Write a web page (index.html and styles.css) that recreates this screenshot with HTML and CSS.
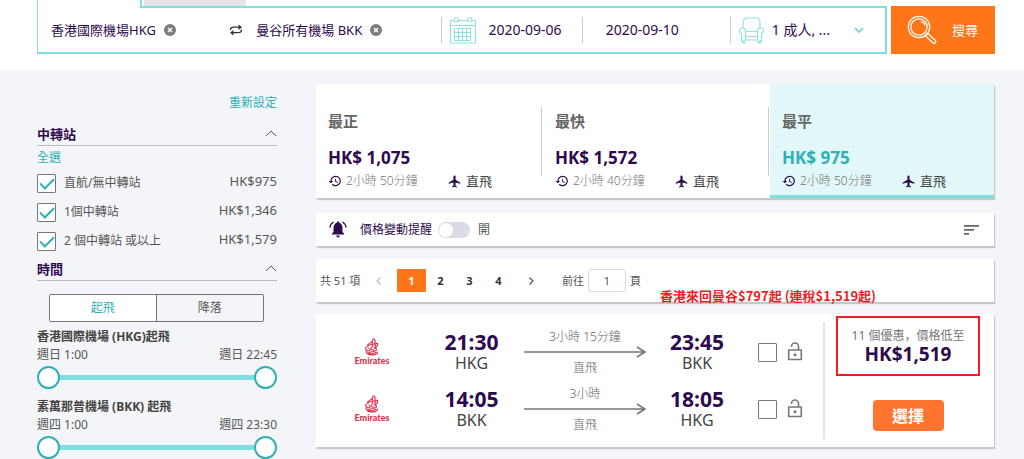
FILE: index.html
```html
<!DOCTYPE html>
<html lang="zh-Hant-HK">
<head>
<meta charset="utf-8">
<meta name="viewport" content="width=device-width, initial-scale=1">
<title>機票搜尋</title>
<link rel="stylesheet" href="styles.css">
</head>
<body>
<svg class="sprite" aria-hidden="true">
  <symbol id="clear" viewBox="0 0 12 12"><circle cx="6" cy="6" r="6" fill="#7d7d7d"/><path d="M4 4l4 4M8 4l-4 4" stroke="#fff" stroke-width="1.5"/></symbol>
  <symbol id="history" viewBox="0 0 24 24"><path fill="#2d0a4e" d="M13 3a9 9 0 0 0-9 9H1l4 4 4-4H6a7 7 0 1 1 2 4.900l-1.400 1.400A9 9 0 1 0 13 3zm-1 5v5l4.300 2.500.7-1.200-3.500-2.100V8z"/></symbol>
  <symbol id="plane" viewBox="2 1 20 22"><path fill="#2d0a4e" d="M10.200 9V3.500a1.800 1.800 0 0 1 3.600 0V9L22 14v2l-8.200-2.500V19l2.200 1.500V22l-4-1-4 1v-1.500l2.200-1.500v-5.500L2 16v-2z"/></symbol>
  <symbol id="lock" viewBox="0 0 16 20"><path d="M4.500 5V4.500a3.500 3.500 0 0 1 7 0V8M1.700 8h12.600v9.500H1.700z" fill="none" stroke="#777" stroke-width="1.600" stroke-linejoin="round"/><circle cx="8" cy="12.800" r="1.500" fill="#777"/></symbol>
  <symbol id="up" viewBox="0 0 12 7"><path d="M1 6l5-5 5 5" fill="none" stroke="#62536f" stroke-width="1"/></symbol>
  <symbol id="arrow" viewBox="0 0 122 12"><path d="M0 6h121M113 1l8 5-8 5" fill="none" stroke="#757575" stroke-width="1.500"/></symbol>
  <symbol id="script-mark" viewBox="0 0 16 18">
    <path fill="none" stroke="#dc3450" stroke-width="1.200" stroke-linecap="round" d="M10 .8C7.500 2 9 4 6.500 5S3 7.500 4 9M11 1.500c-.5 3 1 5 0 8M8.500 4.500c1 2 0 4-1 5.500M3.500 7.500l9-2M13.500 5c.5 3-1 4.500-3 4.500M2 9c-1 3 1 4.500 4 3.500M5 10.500l5 2M10 10c2 0 3 1 2 2.500s-6 1-7.500 2.500M2 13.500c1 2.500 3 3.500 6 3.500s5-1 5.500-3M5 15.500c2 .5 5 0 6.500-1"/>
  </symbol>
</svg>

<header class="top">
  <nav class="tabs" aria-label="行程類型"><span class="tab tab-on"></span><span class="tab"></span></nav>
  <form class="search">
    <div class="fields">
      <div class="field place"><span>香港國際機場HKG</span><button type="button" class="plain" aria-label="清除出發地"><svg width="12" height="12"><use href="#clear"/></svg></button></div>
      <button type="button" class="plain swap" aria-label="交換地點"><svg width="14" height="12" viewBox="0 0 14 12" fill="none" stroke="#333" stroke-width="1.300"><path d="M1.500 6C1.500 4 3 3.200 5 3.200h6M12.500 5.500c0 2.300-1.500 3.200-3.500 3.200H3"/><path fill="#333" stroke="none" d="M9.500.5L13 3.200 9.500 6zM4.500 6L1 8.700l3.500 2.800z"/></svg></button>
      <div class="field"><span>曼谷所有機場 BKK</span><button type="button" class="plain" aria-label="清除目的地"><svg width="12" height="12"><use href="#clear"/></svg></button></div>
      <div class="field date ruled">
        <svg width="26" height="27" viewBox="0 0 26 27" fill="none" stroke="#8fe0e2"><path d="M.5 3.500h25v22.500H.5zM.5 8.500h25M4.500 11.500h16v12h-16zM8.500 11.500v12M12.500 11.500v12M16.500 11.500v12M4.500 15.500h16M4.500 19.500h16"/><path fill="#fff" d="M4.500 1h4v3.500h-4zM17.500 1h4v3.500h-4z"/></svg>
        <span>2020-09-06</span>
      </div>
      <div class="field date return ruled"><span>2020-09-10</span></div>
      <div class="field pax ruled">
        <svg width="25" height="27" viewBox="0 0 25 27" fill="none" stroke="#8fe0e2" stroke-width="1.200"><path d="M4 11V6c0-3 1.500-5 4-5h9c2.500 0 4 2 4 5v5M6.500 14.500h12M6.500 14.500v9M18.500 14.500v9M6.500 19.500h12M6.500 23h12M4 11c-2.500 0-3.500 1.500-3.500 3 0 1.500 1 2 2 2.500V24h4M21 11c2.500 0 3.500 1.500 3.500 3 0 1.500-1 2-2 2.500V24h-4M4 11c2 0 2.500 1.500 2.500 3.500M21 11c-2 0-2.500 1.500-2.500 3.500M3.500 24v2h2v-2M19.500 24v2h2v-2"/></svg>
        <span>1 成人, ...</span>
        <svg class="down" width="10" height="7" viewBox="0 0 10 7" fill="none" stroke="#6cd0d4" stroke-width="1.600"><path d="M1 1l4 4 4-4"/></svg>
      </div>
    </div>
    <button type="submit" class="go">
      <svg width="30" height="30" viewBox="0 0 30 30" fill="none" stroke="#fff" stroke-width="1.200"><circle cx="12" cy="12" r="10.700"/><circle cx="12" cy="12" r="8.200"/><path d="M14 6.500c2 .5 3.500 2 4 4M19.500 20l1.500-1.500M18 20.500l2.500-2.500 8 7.500c1.200 1.500-1 3.700-2.500 2.500z"/></svg>
      <span>搜尋</span>
    </button>
  </form>
</header>

<div class="page">
  <aside class="filters">
    <a href="#" class="link reset">重新設定</a>
    <section>
      <h2 class="heading">中轉站<svg width="12" height="7"><use href="#up"/></svg></h2>
      <a href="#" class="link all">全選</a>
      <ul class="stops">
        <li><label><input type="checkbox" class="box" checked><span>直航/無中轉站</span></label><span class="cost">HK$975</span></li>
        <li><label><input type="checkbox" class="box" checked><span>1個中轉站</span></label><span class="cost">HK$1,346</span></li>
        <li><label><input type="checkbox" class="box" checked><span>2 個中轉站 或以上</span></label><span class="cost">HK$1,579</span></li>
      </ul>
    </section>
    <section>
      <h2 class="heading">時間<svg width="12" height="7"><use href="#up"/></svg></h2>
      <div class="segment"><button type="button" class="on">起飛</button><button type="button">降落</button></div>
      <div class="range">
        <h3>香港國際機場 (HKG)起飛</h3>
        <p><span>週日 1:00</span><span>週日 22:45</span></p>
        <div class="slider"><input type="range" value="0" aria-label="香港最早起飛"><input type="range" value="100" aria-label="香港最遲起飛"></div>
      </div>
      <div class="range">
        <h3>素萬那普機場 (BKK) 起飛</h3>
        <p><span>週四 1:00</span><span>週四 23:30</span></p>
        <div class="slider"><input type="range" value="0" aria-label="曼谷最早起飛"><input type="range" value="100" aria-label="曼谷最遲起飛"></div>
      </div>
    </section>
  </aside>

  <main class="results">
    <div class="card sorts">
      <button type="button" class="sort"><strong>最正</strong><b>HK$ 1,075</b><span class="meta"><svg width="14" height="14"><use href="#history"/></svg><span class="dur">2小時 50分鐘</span><svg width="13" height="13"><use href="#plane"/></svg><span class="direct">直飛</span></span></button>
      <button type="button" class="sort"><strong>最快</strong><b>HK$ 1,572</b><span class="meta"><svg width="14" height="14"><use href="#history"/></svg><span class="dur">2小時 40分鐘</span><svg width="13" height="13"><use href="#plane"/></svg><span class="direct">直飛</span></span></button>
      <button type="button" class="sort current"><strong>最平</strong><b>HK$ 975</b><span class="meta"><svg width="14" height="14"><use href="#history"/></svg><span class="dur">2小時 50分鐘</span><svg width="13" height="13"><use href="#plane"/></svg><span class="direct">直飛</span></span></button>
    </div>

    <div class="card alert">
      <svg width="18" height="17" viewBox="0 0 18 17"><path fill="#2d0a4e" d="M9 .5c.8 0 1.200.5 1.200 1.200C12.500 2.500 13.500 4.500 13.500 7v4l1.500 1.500v1H3v-1L4.500 11V7c0-2.500 1-4.500 3.300-5.300C7.800 1 8.200.5 9 .5zM7.300 14.500h3.400C10.700 17 7.300 17 7.300 14.500z"/><path d="M4.500 1C2.500 2.200 1.200 4 1 6.500M13.500 1c2 1.200 3.300 3 3.500 5.500" fill="none" stroke="#2d0a4e" stroke-width="1.400"/></svg>
      <label class="alert-name" for="notify">價格變動提醒</label>
      <input type="checkbox" id="notify" class="switch">
      <span class="state">開</span>
      <button type="button" class="plain order" aria-label="排序"><svg width="15" height="10" viewBox="0 0 15 10" fill="#666"><path d="M0 0h15v1.700H0zM0 4h10v1.700H0zM0 8h5v1.700H0z"/></svg></button>
    </div>

    <div class="card pager">
      <span class="total">共 51 項</span>
      <button type="button" class="step" aria-label="上一頁" disabled><svg width="5" height="8" viewBox="0 0 5 8" fill="none" stroke="#bbb" stroke-width="1.200"><path d="M4.500.5L1 4l3.500 3.500"/></svg></button>
      <button type="button" class="num active">1</button><button type="button" class="num">2</button><button type="button" class="num">3</button><button type="button" class="num">4</button>
      <button type="button" class="step" aria-label="下一頁"><svg width="5" height="8" viewBox="0 0 5 8" fill="none" stroke="#555" stroke-width="1.200"><path d="M.5.5L4 4 .5 7.500"/></svg></button>
      <label class="jump">前往<input type="text" value="1">頁</label>
    </div>

    <article class="card flight">
      <p class="note">香港來回曼谷$797起 (連稅$1,519起)</p>
      <div class="legs">
        <div class="leg">
          <div class="airline"><svg width="16" height="18"><use href="#script-mark"/></svg><span>Emirates</span></div>
          <div class="point"><b>21:30</b><span>HKG</span></div>
          <div class="path"><span>3小時 15分鐘</span><svg viewBox="0 0 122 12"><use href="#arrow"/></svg><span>直飛</span></div>
          <div class="point"><b>23:45</b><span>BKK</span></div>
          <div class="pick"><input type="checkbox" class="box" aria-label="鎖定去程"><svg width="16" height="20"><use href="#lock"/></svg></div>
        </div>
        <div class="leg">
          <div class="airline"><svg width="16" height="18"><use href="#script-mark"/></svg><span>Emirates</span></div>
          <div class="point"><b>14:05</b><span>BKK</span></div>
          <div class="path"><span>3小時</span><svg viewBox="0 0 122 12"><use href="#arrow"/></svg><span>直飛</span></div>
          <div class="point"><b>18:05</b><span>HKG</span></div>
          <div class="pick"><input type="checkbox" class="box" aria-label="鎖定回程"><svg width="16" height="20"><use href="#lock"/></svg></div>
        </div>
      </div>
      <div class="offer">
        <div class="deal"><span lang="zh-Hans">11 個優惠，價格低至</span><b>HK$1,519</b></div>
        <button type="button" class="choose">選擇</button>
      </div>
    </article>
  </main>
</div>
</body>
</html>
```

FILE: styles.css
```css
:root {
  --ink: #2d0a4e;
  --teal: #2fb0b6;
  --aqua: #7fdfe0;
  --orange: #ff7618;
}

* { box-sizing: border-box; }

body {
  margin: 0;
  background: #f4f5f8;
  color: #555;
  font: 12px/18px "Noto Sans", "Noto Sans CJK TC", sans-serif;
}

h2, h3, p, ul { margin: 0; padding: 0; }
ul { list-style: none; }
svg { display: block; flex: none; }
button, input { font: inherit; color: inherit; margin: 0; }
button { padding: 0; border: 0; background: none; cursor: pointer; }
.sprite { position: absolute; width: 0; height: 0; }
.plain { display: flex; align-items: center; }

/* Search bar */
.top { background: #fff; padding: 0 29px 16px 37px; }
.tabs { display: flex; gap: 2px; height: 6px; }
.tab { width: 102px; height: 6px; background: #e5e5e5; }
.tab-on {
  position: relative;
  width: 105px;
  height: 8px;
  background: #fff;
  border: solid var(--aqua);
  border-width: 0 2px 0 1px;
}
.search { display: flex; gap: 4px; height: 48px; }
.fields {
  flex: 1;
  display: grid;
  grid-template-columns: 191fr 27fr 185fr 140fr 148fr 155fr;
  align-items: center;
  border: 2px solid var(--aqua);
  border-left-width: 1px;
  font-size: 13px;
  color: var(--ink);
}
.field { display: flex; align-items: center; gap: 8px; height: 26px; white-space: nowrap; }
.place { padding-left: 13px; }
.ruled { border-left: 1px solid #ccc; padding-left: 8px; }
.date { font-size: 14px; gap: 12px; }
.return { padding-left: 23px; }
.pax { font-size: 14px; }
.down { margin-left: auto; margin-right: 21px; }
.go {
  flex: 0 0 104px;
  display: flex;
  align-items: center;
  padding-left: 16px;
  gap: 15px;
  background: var(--orange);
  color: #fff;
  font-size: 13px;
}

/* Page columns */
.page {
  display: grid;
  grid-template-columns: 240px 1fr;
  gap: 39px;
  padding: 14px 30px 0 37px;
}

/* Filters */
.filters { display: flex; flex-direction: column; padding-top: 10px; }
.link { color: var(--teal); text-decoration: none; }
.reset { align-self: flex-end; }
.heading {
  display: flex;
  align-items: center;
  justify-content: space-between;
  height: 24px;
  border-bottom: 1px solid #bbb;
  font-size: 13px;
  color: var(--ink);
}
.reset + section { margin-top: 10px; }
.all { display: block; margin-top: 3px; }
.stops { margin-top: 6px; }
.stops li { display: flex; justify-content: space-between; height: 29px; }
.stops li:last-child { height: 26px; }
.stops label { display: flex; gap: 8px; align-items: center; height: 20px; }
.cost { font-size: 13px; line-height: 16px; }
.box {
  appearance: none;
  flex: none;
  display: grid;
  place-items: center;
  width: 19px;
  height: 19px;
  border: 1px solid #777;
  border-radius: 1px;
  background: #fff;
}
.box:checked::before {
  content: "";
  width: 12px;
  height: 6px;
  margin-bottom: 3px;
  border: solid var(--teal);
  border-width: 0 0 2px 2px;
  transform: rotate(-45deg);
}
.segment {
  display: grid;
  grid-template-columns: 1fr 1fr;
  height: 28px;
  margin: 13px 13px 6px 12px;
  border: 1px solid #777;
  border-radius: 2px;
}
.segment .on { background: #fff; color: var(--teal); border-right: 1px solid #777; }
.range { height: 70px; }
.range h3 { font-size: 12px; line-height: 18px; color: #444; }
.range p { display: flex; justify-content: space-between; }
.slider {
  display: grid;
  height: 24px;
  margin-top: 1px;
  background: linear-gradient(var(--aqua), var(--aqua)) center / calc(100% - 22px) 5px no-repeat;
}
.slider input {
  grid-area: 1 / 1;
  appearance: none;
  width: 100%;
  height: 24px;
  background: none;
  pointer-events: none;
}
.slider input::-webkit-slider-thumb {
  appearance: none;
  width: 23px;
  height: 23px;
  border: 2px solid var(--teal);
  border-radius: 50%;
  background: #fff;
  pointer-events: auto;
}

/* Results */
.card { background: #fff; box-shadow: 1px 2px 1px #c6c7ca; }
.sorts { display: grid; grid-template-columns: 227fr 227fr 224fr; }
.sort {
  position: relative;
  display: flex;
  flex-direction: column;
  align-items: flex-start;
  padding: 26px 12px 6px;
  text-align: left;
}
.sort:not(.current)::after {
  content: "";
  position: absolute;
  right: 1px;
  top: 23px;
  bottom: 22px;
  border-right: 1px solid #ccc;
}
.sort strong { font-size: 15px; line-height: 22px; color: #666; }
.sort b { margin-top: 15px; font-size: 17px; line-height: 22px; color: var(--ink); }
.meta { display: flex; align-items: center; height: 22px; margin-top: 1px; }
.dur { width: 106px; padding-left: 4px; color: #777; font-weight: 300; white-space: nowrap; }
.direct { padding-left: 5px; font-size: 13px; color: #444; }
.current { background: #e2f7f7; border-bottom: 3px solid var(--aqua); padding-bottom: 3px; }
.sort.current b { color: var(--teal); }

.alert { display: flex; align-items: center; height: 33px; margin-top: 15px; padding: 0 15px 0 13px; }
.alert-name { margin-left: 13px; color: var(--ink); }
.switch {
  appearance: none;
  width: 32px;
  height: 16px;
  margin-left: 6px;
  padding: 1px;
  border-radius: 8px;
  background: #d9dce5;
}
.switch::before { content: ""; display: block; width: 14px; height: 14px; border-radius: 50%; background: #fff; }
.state { margin-left: 8px; }
.order { margin-left: auto; }

.pager { display: flex; align-items: center; height: 43px; margin-top: 13px; padding-left: 4px; font-size: 11px; }
.total { width: 40px; white-space: nowrap; }
.step { display: grid; place-items: center; width: 37px; height: 23px; }
.num { width: 29px; height: 23px; font-weight: bold; color: #333; }
.num.active { background: var(--orange); color: #fff; }
.jump { display: flex; align-items: center; gap: 4px; margin-left: 12px; }
.jump input {
  width: 38px;
  height: 23px;
  padding: 0;
  border: 1px solid #d9dce5;
  border-radius: 3px;
  text-align: center;
  background: #fff;
}

.flight {
  position: relative;
  display: grid;
  grid-template-columns: 507fr 171fr;
  margin-top: 12px;
}
.note {
  position: absolute;
  left: 344px;
  top: -27px;
  font: bold 13px/18px "Noto Sans CJK TC", sans-serif;
  color: #ee1c25;
  white-space: nowrap;
}
.legs { display: grid; gap: 7px; padding: 13px 0; }
.leg { display: grid; grid-template-columns: 112fr 87fr 140fr 84fr 84fr; align-items: center; }
.airline { display: grid; justify-items: center; color: #dc3450; }
.airline span { font: 900 9px/10px Lato, sans-serif; }
.point { display: grid; justify-items: center; }
.point b { font-size: 21px; line-height: 22px; color: var(--ink); }
.point span { font-size: 16px; line-height: 20px; color: #444; }
.path { display: grid; justify-items: center; padding: 0 9px; }
.path svg { width: 100%; }
.path span { line-height: 19px; color: #666; font-weight: 300; }
.pick { display: flex; align-items: center; gap: 10px; padding-left: 19px; }
.offer { position: relative; display: flex; flex-direction: column; align-items: center; padding: 2px 14px 0 13px; }
.offer::before { content: ""; position: absolute; left: 0; top: 8px; bottom: 8px; border-left: 2px solid #e6e6ea; }
.deal {
  display: grid;
  justify-items: center;
  align-content: center;
  width: 100%;
  height: 60px;
  border: 2px solid #ee1c25;
  white-space: nowrap;
}
.deal span { line-height: 16px; color: #777; font-family: "Noto Sans", "Noto Sans CJK SC", sans-serif; }
.deal b { font-size: 19px; line-height: 20px; color: var(--ink); }
.choose {
  width: 71px;
  height: 31px;
  margin-top: 24px;
  border-radius: 4px;
  background: #ff7530;
  color: #fff;
  font-size: 16px;
  font-weight: bold;
}
```
